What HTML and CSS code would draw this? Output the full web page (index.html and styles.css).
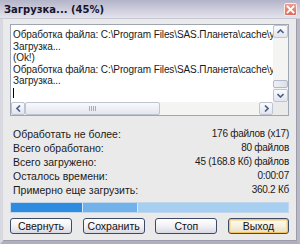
FILE: index.html
```html
<!DOCTYPE html>
<html>
<head>
<meta charset="utf-8">
<link rel="stylesheet" href="styles.css">
</head>
<body>
<div class="window">
  <div class="titlebar">
    <span class="title">Загрузка... (45%)</span>
    <span class="close"><svg width="9" height="9" viewBox="0 0 9 9"><path d="M1.5 1.5 L7.5 7.5 M7.5 1.5 L1.5 7.5" stroke="#fff" stroke-width="1.8" stroke-linecap="square"/></svg></span>
  </div>
  <div class="content">
    <div class="log">
      <div class="log-text">
        <div>Обработка файла: C:\Program Files\SAS.Планета\cache\yandex\z17</div>
        <div>Загрузка...</div>
        <div>(Ok!)</div>
        <div>Обработка файла: C:\Program Files\SAS.Планета\cache\yandex\z17</div>
        <div>Загрузка...</div>
        <div><span class="caret"></span></div>
      </div>
      <div class="vscroll">
        <div class="sbtn"><svg width="7" height="5" viewBox="0 0 7 5"><path d="M0.5 4 L3.5 1 L6.5 4" fill="none" stroke="#4d6185" stroke-width="1.6"/></svg></div>
        <div class="vtrack"><div class="vthumb"></div></div>
        <div class="sbtn"><svg width="7" height="5" viewBox="0 0 7 5"><path d="M0.5 1 L3.5 4 L6.5 1" fill="none" stroke="#4d6185" stroke-width="1.6"/></svg></div>
      </div>
      <div class="hscroll">
        <div class="sbtn"><svg width="5" height="7" viewBox="0 0 5 7"><path d="M4 0.5 L1 3.5 L4 6.5" fill="none" stroke="#4d6185" stroke-width="1.6"/></svg></div>
        <div class="htrack"><div class="hthumb"><span class="grip"></span></div></div>
        <div class="sbtn"><svg width="5" height="7" viewBox="0 0 5 7"><path d="M1 0.5 L4 3.5 L1 6.5" fill="none" stroke="#4d6185" stroke-width="1.6"/></svg></div>
      </div>
      <div class="corner"></div>
    </div>
    <div class="stats">
      <div class="row"><span>Обработать не более:</span><span class="val">176 файлов (x17)</span></div>
      <div class="row"><span>Всего обработано:</span><span class="val">80 файлов</span></div>
      <div class="row"><span>Всего загружено:</span><span class="val">45 (168.8 Кб) файлов</span></div>
      <div class="row"><span>Осталось времени:</span><span class="val">0:00:07</span></div>
      <div class="row"><span>Примерно еще загрузить:</span><span class="val">360.2 Кб</span></div>
    </div>
    <div class="progress">
      <div class="seg seg1"></div>
      <div class="seg seg2"></div>
      <div class="seg seg3"></div>
    </div>
    <div class="buttons">
      <button class="btn">Свернуть</button>
      <button class="btn">Сохранить</button>
      <button class="btn">Стоп</button>
      <button class="btn default">Выход</button>
    </div>
  </div>
</div>
</body>
</html>
```
FILE: styles.css
```css
html, body {
  margin: 0;
  padding: 0;
}
body {
  width: 300px;
  height: 244px;
  overflow: hidden;
  background: #ebeaea;
  font-family: "Liberation Sans", Arial, sans-serif;
  font-size: 10.5px;
  color: #1a1a1a;
}
.window {
  width: 300px;
  height: 244px;
  box-sizing: border-box;
  display: flex;
  flex-direction: column;
  background: #ebeaea;
  border-left: 3px solid #d8d8e0;
  border-right: 3px solid #b8b8c4;
  border-bottom: 3px solid #b0b0bc;
  box-shadow: inset -1px 0 0 #9c9cac, inset 0 -1px 0 #9c9cac;
}
.titlebar {
  height: 18px;
  margin: 0 -3px;
  padding: 0 3px 0 4px;
  display: flex;
  align-items: center;
  justify-content: space-between;
  background: linear-gradient(#b4b4ca, #d0d0de 60%, #e4e4ee);
  border-bottom: 1px solid #c8c8d4;
}
.title {
  font-family: "DejaVu Sans", Verdana, sans-serif;
  font-weight: bold;
  font-size: 10px;
  color: #14142c;
}
.close {
  width: 13px;
  height: 13px;
  box-sizing: border-box;
  display: flex;
  align-items: center;
  justify-content: center;
  background: linear-gradient(#ee9c8e, #dc6a5c);
  border: 1px solid #fbeae6;
  border-radius: 2px;
}
.content {
  flex: 1;
  display: flex;
  flex-direction: column;
  padding: 5px 8px 0 7px;
}
.log {
  height: 92px;
  box-sizing: border-box;
  border: 1px solid #9ea6b4;
  background: #fff;
  display: grid;
  grid-template-columns: 1fr 15px;
  grid-template-rows: 1fr 13px;
}
.log-text {
  padding: 4px 0 0 2px;
  font-size: 10px;
  letter-spacing: -0.1px;
  line-height: 11.6px;
  white-space: nowrap;
  overflow: hidden;
}
.caret {
  display: inline-block;
  width: 1px;
  height: 10px;
  background: #000;
  vertical-align: middle;
}
.vscroll {
  display: flex;
  flex-direction: column;
  background: #f4f4f2;
}
.vtrack {
  flex: 1;
  display: flex;
  flex-direction: column;
  justify-content: flex-end;
}
.vthumb {
  height: 8px;
  margin: 0 0 1px;
  box-sizing: border-box;
  border: 1px solid #b4b8c8;
  border-radius: 2px;
  background: linear-gradient(90deg, #eef0f6, #dcdfe8);
}
.sbtn {
  width: 15px;
  height: 13px;
  box-sizing: border-box;
  display: flex;
  align-items: center;
  justify-content: center;
  border: 1px solid #c0c4d2;
  border-radius: 2px;
  background: linear-gradient(#fafbfd, #e2e5ee);
}
.hscroll {
  display: flex;
  background: #f4f4f2;
}
.hscroll .sbtn {
  width: 14px;
  height: 13px;
}
.htrack {
  flex: 1;
  display: flex;
}
.hthumb {
  width: 135px;
  box-sizing: border-box;
  border: 1px solid #c0c4d2;
  border-radius: 2px;
  background: linear-gradient(#f8f9fb, #e4e6ee);
  display: flex;
  align-items: center;
  justify-content: center;
}
.grip {
  width: 7px;
  height: 5px;
  background: repeating-linear-gradient(90deg, #a8acb8 0 1px, transparent 1px 2px);
}
.corner {
  background: #ebeaea;
}
.stats {
  margin-top: 11px;
  display: flex;
  flex-direction: column;
  padding: 0 0 0 3px;
}
.row {
  height: 14px;
  line-height: 14px;
  display: flex;
  justify-content: space-between;
}
.val {
  font-size: 10px;
  letter-spacing: -0.25px;
}
.progress {
  margin-top: 5px;
  height: 11px;
  box-sizing: border-box;
  display: flex;
  border: 1px solid #c4d6ea;
  background: #a6cff2;
}
.seg1 {
  width: 71px;
  background: #2e8ce0;
  border-right: 1px solid #d6e8f8;
}
.seg2 {
  width: 54px;
  background: #72b2ea;
  border-right: 1px solid #d6e8f8;
}
.seg3 {
  flex: 1;
}
.buttons {
  margin-top: 5px;
  display: flex;
  justify-content: space-between;
}
.btn {
  width: 62px;
  height: 16px;
  padding: 0;
  font-family: "Liberation Sans", Arial, sans-serif;
  font-size: 10.5px;
  color: #111;
  border: 1px solid #3c4a6a;
  border-radius: 3px;
  background: linear-gradient(#ffffff, #f2f2f6 50%, #d8d8e2);
}
.btn.default {
  width: 61px;
  box-shadow: inset 0 0 0 1px #f4c460, inset 0 0 0 2px #fbe2a4;
  background: linear-gradient(#fffdf4, #f6f0de 50%, #e4dcc4);
}
```
